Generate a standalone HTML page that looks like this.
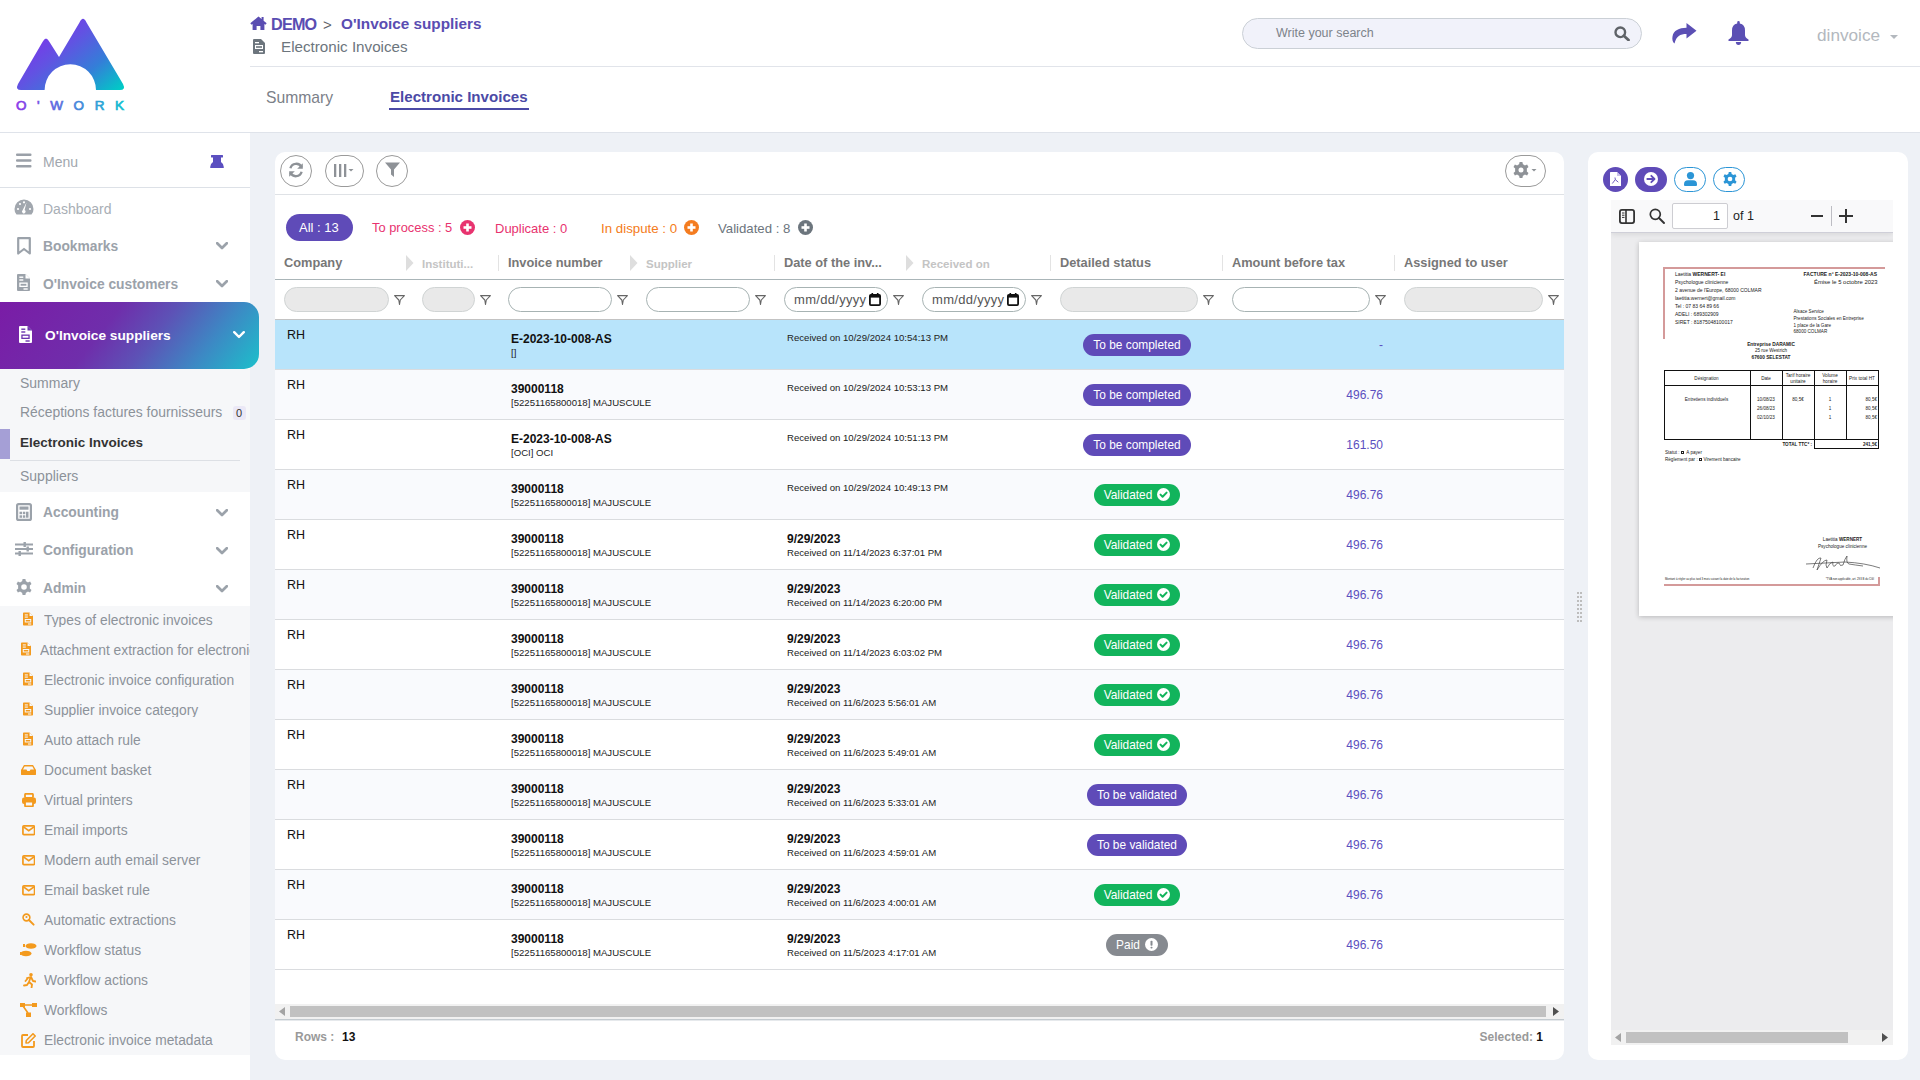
<!DOCTYPE html><html><head><meta charset="utf-8"><title>Electronic Invoices</title><style>

*{box-sizing:border-box}
html,body{margin:0;padding:0}
body{width:1920px;height:1080px;position:relative;overflow:hidden;background:#eef1f6;font-family:"Liberation Sans", sans-serif;}
.ab{position:absolute}
.t{position:absolute;white-space:nowrap;line-height:1}
svg{display:block}

</style></head><body>
<div class="ab" style="left:0;top:0;width:1920px;height:133px;background:#fff;border-bottom:1px solid #dfe3ea"></div>
<div class="ab" style="left:250px;top:66px;width:1670px;height:1px;background:#e1e4ea"></div>
<svg class="ab" style="left:0;top:0" width="250" height="132" viewBox="0 0 250 132">
<defs><linearGradient id="lg" x1="0" y1="0.15" x2="1" y2="0.95"><stop offset="0" stop-color="#8a24ee"/><stop offset="0.4" stop-color="#6153e2"/><stop offset="0.7" stop-color="#347ed8"/><stop offset="1" stop-color="#00cbc6"/></linearGradient>
<linearGradient id="lg2" x1="0" y1="0" x2="1" y2="0"><stop offset="0" stop-color="#8a3ae8"/><stop offset="1" stop-color="#12bfd0"/></linearGradient></defs>
<path d="M18 84 L42.5 42 Q46 35 49.5 42 L59 57 L79.5 22.5 Q83 15 86.5 22.5 L123 84 Q126 90 120 90 L96 90 A25.7 25.7 0 0 0 44.6 90 L21 90 Q15 90 18 84 Z" fill="url(#lg)"/>
<text x="16" y="110" font-family="Liberation Sans" font-size="13.5" fill="url(#lg2)" stroke="url(#lg2)" stroke-width="0.7" textLength="108" lengthAdjust="spacing">O'WORK</text>
</svg>
<svg class="ab" style="left:250px;top:16px" width="17" height="14" viewBox="0 0 17 14"><path d="M8.5 0.5 L0.3 7.3 L1.6 8.8 L2.6 8 L2.6 14 L6.6 14 L6.6 10 L10.4 10 L10.4 14 L14.4 14 L14.4 8 L15.4 8.8 L16.7 7.3 L13.6 4.7 L13.6 1 L11.6 1 L11.6 3 Z" fill="#5a4db2"/></svg>
<div class="t" style="left:271px;top:15.6px;font-size:16.2px;letter-spacing:-0.8px;font-weight:bold;color:#5a4db2">DEMO</div>
<div class="t" style="left:323px;top:16.5px;font-size:15px;color:#5f6368">&gt;</div>
<div class="t" style="left:341px;top:16.3px;font-size:15.3px;font-weight:bold;color:#5a4db2">O'Invoice suppliers</div>
<svg class="ab" style="left:253px;top:39px" width="12" height="15" viewBox="0 0 12 15"><path d="M0 1 Q0 0 1 0 L8 0 L12 4 L12 14 Q12 15 11 15 L1 15 Q0 15 0 14 Z" fill="#6c757d"/><rect x="2" y="3" width="4" height="1.3" fill="#fff"/><rect x="2" y="6" width="8" height="4" fill="#fff"/><rect x="3" y="7.2" width="6" height="1.6" fill="#6c757d"/><rect x="6" y="12" width="4" height="1.3" fill="#fff"/></svg>
<div class="t" style="left:281px;top:39px;font-size:15.2px;color:#6c757d">Electronic Invoices</div>
<div class="t" style="left:266px;top:90px;font-size:15.7px;color:#7b8088">Summary</div>
<div class="t" style="left:390px;top:89px;font-size:15.1px;font-weight:bold;color:#4b4aa6">Electronic Invoices</div>
<div class="ab" style="left:389px;top:108px;width:140px;height:2px;background:#4b4aa6"></div>
<div class="ab" style="left:1242px;top:18px;width:400px;height:31px;border-radius:16px;background:#f1f2fa;border:1px solid #cbd0d6"></div>
<div class="t" style="left:1276px;top:27px;font-size:12.5px;color:#7d838a">Write your search</div>
<svg class="ab" style="left:1614px;top:26px" width="16" height="15" viewBox="0 0 16 15"><circle cx="6.3" cy="6.3" r="4.8" fill="none" stroke="#5f6368" stroke-width="2.4"/><line x1="9.8" y1="9.8" x2="14.5" y2="14" stroke="#5f6368" stroke-width="2.8" stroke-linecap="round"/></svg>
<svg class="ab" style="left:1672px;top:23px" width="25" height="21" viewBox="0 0 25 21"><path d="M14.5 0 L24.5 7.8 L14.5 15.6 L14.5 11 C8 11 4.5 13 2.5 20.5 C0.5 19 0 16 0.5 13.5 C1.5 7.5 7 5 14.5 4.8 Z" fill="#5b4fb4"/></svg>
<svg class="ab" style="left:1728px;top:21px" width="21" height="24" viewBox="0 0 21 24"><path d="M10.5 0 Q11.8 0 11.8 1.4 L11.8 2.6 Q17 3.6 17 9.5 L17 14 Q17 16.5 20.5 18.5 L20.5 20 L0.5 20 L0.5 18.5 Q4 16.5 4 14 L4 9.5 Q4 3.6 9.2 2.6 L9.2 1.4 Q9.2 0 10.5 0 Z" fill="#5b4fb4"/><path d="M7.8 21 L13.2 21 Q13 24 10.5 24 Q8 24 7.8 21 Z" fill="#5b4fb4"/></svg>
<div class="t" style="left:1817px;top:27px;font-size:17.2px;color:#b3b8be">dinvoice</div>
<svg class="ab" style="left:1890px;top:35px" width="8" height="4" viewBox="0 0 8 4"><path d="M0 0 L8 0 L4 4 Z" fill="#b3b8be"/></svg>
<div class="ab" style="left:0;top:133px;width:250px;height:947px;background:#fff"></div>
<div class="ab" style="left:0;top:187px;width:250px;height:1px;background:#dde1e7"></div>
<svg class="ab" style="left:16px;top:153px" width="16" height="15" viewBox="0 0 16 15"><rect x="0" y="0.5" width="15.5" height="2.4" rx="1" fill="#9aa0a8"/><rect x="0" y="6.3" width="15.5" height="2.4" rx="1" fill="#9aa0a8"/><rect x="0" y="12" width="15.5" height="2.4" rx="1" fill="#9aa0a8"/></svg>
<div class="t" style="left:43px;top:155px;font-size:14px;color:#a1a7ae">Menu</div>
<svg class="ab" style="left:210px;top:155px" width="14" height="14" viewBox="0 0 14 14"><path d="M1 0.6 Q1 0 1.6 0 L12.4 0 Q13 0 13 0.6 L13 2 Q13 2.6 12.2 2.6 L11 2.6 L11 7 Q13.6 8.6 13.8 12 L13.8 12.4 Q13.8 13 13.2 13 L0.8 13 Q0.2 13 0.2 12.4 L0.2 12 Q0.4 8.6 3 7 L3 2.6 L1.8 2.6 Q1 2.6 1 2 Z" fill="#5b4fc0"/></svg>
<svg class="ab" style="left:14px;top:199px" width="20" height="16" viewBox="0 0 20 16"><path d="M10 0.5 A9.5 9.5 0 0 1 19.5 10 Q19.5 14 17.5 15.5 L2.5 15.5 Q0.5 14 0.5 10 A9.5 9.5 0 0 1 10 0.5 Z" fill="#a1a7ae"/><circle cx="4" cy="10" r="1.1" fill="#fff"/><circle cx="16" cy="10" r="1.1" fill="#fff"/><circle cx="6" cy="5" r="1.1" fill="#fff"/><circle cx="10" cy="3.3" r="1.1" fill="#fff"/><path d="M12.5 3.5 L10.6 11 A1.8 1.8 0 1 1 8.6 11.3 Z" fill="#fff"/></svg>
<div class="t" style="left:43px;top:202px;font-size:14px;color:#a8aeb5">Dashboard</div>
<svg class="ab" style="left:17px;top:237px" width="14" height="18" viewBox="0 0 14 18"><path d="M1.2 1.2 L12.8 1.2 L12.8 16.5 L7 12 L1.2 16.5 Z" fill="none" stroke="#9ba2aa" stroke-width="2.2" stroke-linejoin="round"/></svg>
<div class="t" style="left:43px;top:240px;font-size:13.8px;font-weight:bold;color:#9ba2aa">Bookmarks</div>
<svg class="ab" style="left:216px;top:242px" width="12" height="8" viewBox="0 0 12 8"><path d="M1.2 1.2 L6 6 L10.8 1.2" fill="none" stroke="#9ba2aa" stroke-width="2.7" stroke-linecap="round" stroke-linejoin="round"/></svg>
<svg class="ab" style="left:17px;top:274px" width="13" height="17" viewBox="0 0 13 17"><path d="M0 1 Q0 0 1 0 L8.5 0 L13 4.5 L13 16 Q13 17 12 17 L1 17 Q0 17 0 16 Z" fill="#9ba2aa"/><path d="M8.5 0 L8.5 4.5 L13 4.5" fill="#fff"/><rect x="2.3" y="2.5" width="4" height="1.4" fill="#fff"/><rect x="2.3" y="5.3" width="4" height="1.4" fill="#fff"/><rect x="2.3" y="8.5" width="8.4" height="4.5" fill="#fff"/><rect x="3.6" y="9.8" width="5.8" height="1.9" fill="#9ba2aa"/><rect x="6.5" y="14.3" width="4.2" height="1.4" fill="#fff"/></svg>
<div class="t" style="left:43px;top:278px;font-size:13.8px;font-weight:bold;color:#9ba2aa">O'Invoice customers</div>
<svg class="ab" style="left:216px;top:280px" width="12" height="8" viewBox="0 0 12 8"><path d="M1.2 1.2 L6 6 L10.8 1.2" fill="none" stroke="#9ba2aa" stroke-width="2.7" stroke-linecap="round" stroke-linejoin="round"/></svg>
<div class="ab" style="left:0;top:369px;width:250px;height:123px;background:#f6f7f9"></div>
<div class="ab" style="left:0;top:302px;width:259px;height:67px;border-radius:0 15px 15px 0;background:linear-gradient(128deg,#7a1ca6 0%,#6f2eab 40%,#5d52b6 58%,#3d88c4 78%,#1cc0cb 100%)"></div>
<svg class="ab" style="left:19px;top:326px" width="13" height="17" viewBox="0 0 13 17"><path d="M0 1 Q0 0 1 0 L8.5 0 L13 4.5 L13 16 Q13 17 12 17 L1 17 Q0 17 0 16 Z" fill="#fff"/><path d="M8.5 0 L8.5 4.5 L13 4.5" fill="#6c34ae"/><rect x="2.3" y="2.5" width="4" height="1.4" fill="#6c34ae"/><rect x="2.3" y="5.3" width="4" height="1.4" fill="#6c34ae"/><rect x="2.3" y="8.5" width="8.4" height="4.5" fill="#6c34ae"/><rect x="3.6" y="9.8" width="5.8" height="1.9" fill="#fff"/><rect x="6.5" y="14.3" width="4.2" height="1.4" fill="#6c34ae"/></svg>
<div class="t" style="left:45px;top:329px;font-size:13.7px;font-weight:bold;color:#fff">O'Invoice suppliers</div>
<svg class="ab" style="left:233px;top:331px" width="12" height="8" viewBox="0 0 12 8"><path d="M1.2 1.2 L6 6 L10.8 1.2" fill="none" stroke="#fff" stroke-width="2.4" stroke-linecap="round" stroke-linejoin="round"/></svg>
<div class="t" style="left:20px;top:376px;font-size:14px;color:#8c9299">Summary</div>
<div class="t" style="left:20px;top:406px;font-size:13.9px;color:#8c9299">Réceptions factures fournisseurs</div>
<div class="ab" style="left:233px;top:406px;width:13px;height:14px;border-radius:3px;background:#ebe8f6"></div>
<div class="t" style="left:236px;top:408px;font-size:11px;color:#333">0</div>
<div class="ab" style="left:0;top:429px;width:10px;height:30px;background:#a59fd6"></div>
<div class="t" style="left:20px;top:436px;font-size:13.5px;font-weight:bold;color:#333">Electronic Invoices</div>
<div class="ab" style="left:10px;top:460px;width:230px;height:1px;background:#dde0e5"></div>
<div class="t" style="left:20px;top:469px;font-size:14px;color:#8c9299">Suppliers</div>
<svg class="ab" style="left:16px;top:503px" width="16" height="18" viewBox="0 0 16 18"><rect x="1.1" y="1.1" width="13.8" height="15.8" rx="1.5" fill="none" stroke="#9ba2aa" stroke-width="2.2"/><rect x="3.5" y="3.5" width="9" height="3.2" fill="#9ba2aa"/><rect x="3.5" y="8.7" width="2.5" height="2.5" fill="#9ba2aa"/><rect x="6.8" y="8.7" width="2.5" height="2.5" fill="#9ba2aa"/><rect x="10" y="8.7" width="2.5" height="6" fill="#9ba2aa"/><rect x="3.5" y="12.3" width="2.5" height="2.5" fill="#9ba2aa"/><rect x="6.8" y="12.3" width="2.5" height="2.5" fill="#9ba2aa"/></svg>
<div class="t" style="left:43px;top:506px;font-size:13.8px;font-weight:bold;color:#9ba2aa">Accounting</div>
<svg class="ab" style="left:216px;top:509px" width="12" height="8" viewBox="0 0 12 8"><path d="M1.2 1.2 L6 6 L10.8 1.2" fill="none" stroke="#9ba2aa" stroke-width="2.7" stroke-linecap="round" stroke-linejoin="round"/></svg>
<svg class="ab" style="left:15px;top:542px" width="18" height="14" viewBox="0 0 18 14"><rect x="0" y="1.5" width="18" height="2" fill="#9ba2aa"/><rect x="0" y="6" width="18" height="2" fill="#9ba2aa"/><rect x="0" y="10.5" width="18" height="2" fill="#9ba2aa"/><rect x="8.5" y="0" width="2.4" height="5" fill="#9ba2aa"/><rect x="11.5" y="4.5" width="2.4" height="5" fill="#9ba2aa"/><rect x="3.5" y="9" width="2.4" height="5" fill="#9ba2aa"/></svg>
<div class="t" style="left:43px;top:544px;font-size:13.8px;font-weight:bold;color:#9ba2aa">Configuration</div>
<svg class="ab" style="left:216px;top:547px" width="12" height="8" viewBox="0 0 12 8"><path d="M1.2 1.2 L6 6 L10.8 1.2" fill="none" stroke="#9ba2aa" stroke-width="2.7" stroke-linecap="round" stroke-linejoin="round"/></svg>
<svg class="ab" style="left:16px;top:579px" width="16" height="16" viewBox="0 0 16 16"><path d="M6.6 0 L9.4 0 L9.9 2.3 Q11 2.7 11.9 3.4 L14.1 2.6 L15.5 5 L13.8 6.6 Q14 8 13.8 9.4 L15.5 11 L14.1 13.4 L11.9 12.6 Q11 13.3 9.9 13.7 L9.4 16 L6.6 16 L6.1 13.7 Q5 13.3 4.1 12.6 L1.9 13.4 L0.5 11 L2.2 9.4 Q2 8 2.2 6.6 L0.5 5 L1.9 2.6 L4.1 3.4 Q5 2.7 6.1 2.3 Z M8 5.2 A2.8 2.8 0 1 0 8 10.8 A2.8 2.8 0 1 0 8 5.2 Z" fill="#9ba2aa" fill-rule="evenodd"/></svg>
<div class="t" style="left:43px;top:582px;font-size:13.8px;font-weight:bold;color:#9ba2aa">Admin</div>
<svg class="ab" style="left:216px;top:585px" width="12" height="8" viewBox="0 0 12 8"><path d="M1.2 1.2 L6 6 L10.8 1.2" fill="none" stroke="#9ba2aa" stroke-width="2.7" stroke-linecap="round" stroke-linejoin="round"/></svg>
<div class="ab" style="left:0;top:606px;width:250px;height:449px;background:#f6f7f9"></div>
<svg class="ab" style="left:23px;top:612px" width="10" height="14" viewBox="0 0 13 17"><path d="M0 1 Q0 0 1 0 L8.5 0 L13 4.5 L13 16 Q13 17 12 17 L1 17 Q0 17 0 16 Z" fill="#f39a1e"/><path d="M8.5 0 L8.5 4.5 L13 4.5" fill="#f6f7f9"/><rect x="2.3" y="2.5" width="4" height="1.4" fill="#f6f7f9"/><rect x="2.3" y="5.3" width="4" height="1.4" fill="#f6f7f9"/><rect x="2.3" y="8.5" width="8.4" height="4.5" fill="#f6f7f9"/><rect x="3.6" y="9.8" width="5.8" height="1.9" fill="#f39a1e"/><rect x="6.5" y="14.3" width="4.2" height="1.4" fill="#f6f7f9"/></svg>
<div class="ab" style="left:44px;top:613.5px;width:206px;overflow:hidden;white-space:nowrap;line-height:1;font-size:13.8px;color:#8c9299">Types of electronic invoices</div>
<svg class="ab" style="left:21px;top:642px" width="10" height="14" viewBox="0 0 13 17"><path d="M0 1 Q0 0 1 0 L8.5 0 L13 4.5 L13 16 Q13 17 12 17 L1 17 Q0 17 0 16 Z" fill="#f39a1e"/><path d="M8.5 0 L8.5 4.5 L13 4.5" fill="#f6f7f9"/><rect x="2.3" y="2.5" width="4" height="1.4" fill="#f6f7f9"/><rect x="2.3" y="5.3" width="4" height="1.4" fill="#f6f7f9"/><rect x="2.3" y="8.5" width="8.4" height="4.5" fill="#f6f7f9"/><rect x="3.6" y="9.8" width="5.8" height="1.9" fill="#f39a1e"/><rect x="6.5" y="14.3" width="4.2" height="1.4" fill="#f6f7f9"/></svg>
<div class="ab" style="left:40px;top:643.5px;width:210px;overflow:hidden;white-space:nowrap;line-height:1;font-size:13.8px;color:#8c9299">Attachment extraction for electronic invoices</div>
<svg class="ab" style="left:23px;top:672px" width="10" height="14" viewBox="0 0 13 17"><path d="M0 1 Q0 0 1 0 L8.5 0 L13 4.5 L13 16 Q13 17 12 17 L1 17 Q0 17 0 16 Z" fill="#f39a1e"/><path d="M8.5 0 L8.5 4.5 L13 4.5" fill="#f6f7f9"/><rect x="2.3" y="2.5" width="4" height="1.4" fill="#f6f7f9"/><rect x="2.3" y="5.3" width="4" height="1.4" fill="#f6f7f9"/><rect x="2.3" y="8.5" width="8.4" height="4.5" fill="#f6f7f9"/><rect x="3.6" y="9.8" width="5.8" height="1.9" fill="#f39a1e"/><rect x="6.5" y="14.3" width="4.2" height="1.4" fill="#f6f7f9"/></svg>
<div class="ab" style="left:44px;top:673.5px;width:206px;overflow:hidden;white-space:nowrap;line-height:1;font-size:13.8px;color:#8c9299">Electronic invoice configuration</div>
<svg class="ab" style="left:23px;top:702px" width="10" height="14" viewBox="0 0 13 17"><path d="M0 1 Q0 0 1 0 L8.5 0 L13 4.5 L13 16 Q13 17 12 17 L1 17 Q0 17 0 16 Z" fill="#f39a1e"/><path d="M8.5 0 L8.5 4.5 L13 4.5" fill="#f6f7f9"/><rect x="2.3" y="2.5" width="4" height="1.4" fill="#f6f7f9"/><rect x="2.3" y="5.3" width="4" height="1.4" fill="#f6f7f9"/><rect x="2.3" y="8.5" width="8.4" height="4.5" fill="#f6f7f9"/><rect x="3.6" y="9.8" width="5.8" height="1.9" fill="#f39a1e"/><rect x="6.5" y="14.3" width="4.2" height="1.4" fill="#f6f7f9"/></svg>
<div class="ab" style="left:44px;top:703.5px;width:206px;overflow:hidden;white-space:nowrap;line-height:1;font-size:13.8px;color:#8c9299">Supplier invoice category</div>
<svg class="ab" style="left:23px;top:732px" width="10" height="14" viewBox="0 0 13 17"><path d="M0 1 Q0 0 1 0 L8.5 0 L13 4.5 L13 16 Q13 17 12 17 L1 17 Q0 17 0 16 Z" fill="#f39a1e"/><path d="M8.5 0 L8.5 4.5 L13 4.5" fill="#f6f7f9"/><rect x="2.3" y="2.5" width="4" height="1.4" fill="#f6f7f9"/><rect x="2.3" y="5.3" width="4" height="1.4" fill="#f6f7f9"/><rect x="2.3" y="8.5" width="8.4" height="4.5" fill="#f6f7f9"/><rect x="3.6" y="9.8" width="5.8" height="1.9" fill="#f39a1e"/><rect x="6.5" y="14.3" width="4.2" height="1.4" fill="#f6f7f9"/></svg>
<div class="ab" style="left:44px;top:733.5px;width:206px;overflow:hidden;white-space:nowrap;line-height:1;font-size:13.8px;color:#8c9299">Auto attach rule</div>
<svg class="ab" style="left:21px;top:765px" width="15" height="10" viewBox="0 0 15 12" preserveAspectRatio="none"><path d="M3 0 L12 0 L15 6 L15 11 Q15 12 14 12 L1 12 Q0 12 0 11 L0 6 Z" fill="#f39a1e"/><path d="M3.6 1.8 L11.4 1.8 L13 5.5 L9.5 5.5 L8.7 7.3 L6.3 7.3 L5.5 5.5 L2 5.5 Z" fill="#f6f7f9"/></svg>
<div class="ab" style="left:44px;top:763.5px;width:206px;overflow:hidden;white-space:nowrap;line-height:1;font-size:13.8px;color:#8c9299">Document basket</div>
<svg class="ab" style="left:22px;top:793px" width="14" height="14" viewBox="0 0 14 14"><rect x="3" y="0.8" width="8" height="4" rx="1" fill="none" stroke="#f39a1e" stroke-width="1.8"/><rect x="0" y="4.5" width="14" height="6.5" rx="2" fill="#f39a1e"/><rect x="3" y="8.5" width="8" height="5" rx="1" fill="#f6f7f9" stroke="#f39a1e" stroke-width="1.8"/></svg>
<div class="ab" style="left:44px;top:793.5px;width:206px;overflow:hidden;white-space:nowrap;line-height:1;font-size:13.8px;color:#8c9299">Virtual printers</div>
<svg class="ab" style="left:21.5px;top:825px" width="13.5" height="10.5" viewBox="0 0 14 11"><rect x="0.9" y="0.9" width="12.2" height="9.2" rx="1" fill="none" stroke="#f39a1e" stroke-width="1.8"/><path d="M1.5 2 L7 6 L12.5 2" fill="none" stroke="#f39a1e" stroke-width="1.8"/></svg>
<div class="ab" style="left:44px;top:823.5px;width:206px;overflow:hidden;white-space:nowrap;line-height:1;font-size:13.8px;color:#8c9299">Email imports</div>
<svg class="ab" style="left:21.5px;top:855px" width="13.5" height="10.5" viewBox="0 0 14 11"><rect x="0.9" y="0.9" width="12.2" height="9.2" rx="1" fill="none" stroke="#f39a1e" stroke-width="1.8"/><path d="M1.5 2 L7 6 L12.5 2" fill="none" stroke="#f39a1e" stroke-width="1.8"/></svg>
<div class="ab" style="left:44px;top:853.5px;width:206px;overflow:hidden;white-space:nowrap;line-height:1;font-size:13.8px;color:#8c9299">Modern auth email server</div>
<svg class="ab" style="left:21.5px;top:885px" width="13.5" height="10.5" viewBox="0 0 14 11"><rect x="0.9" y="0.9" width="12.2" height="9.2" rx="1" fill="none" stroke="#f39a1e" stroke-width="1.8"/><path d="M1.5 2 L7 6 L12.5 2" fill="none" stroke="#f39a1e" stroke-width="1.8"/></svg>
<div class="ab" style="left:44px;top:883.5px;width:206px;overflow:hidden;white-space:nowrap;line-height:1;font-size:13.8px;color:#8c9299">Email basket rule</div>
<svg class="ab" style="left:22px;top:913px" width="12.5" height="12.5" viewBox="0 0 14 14"><circle cx="5" cy="5" r="3.8" fill="none" stroke="#f39a1e" stroke-width="1.8"/><line x1="7.8" y1="7.8" x2="13" y2="13" stroke="#f39a1e" stroke-width="2.2" stroke-linecap="round"/><circle cx="5" cy="4.5" r="1.2" fill="#f39a1e"/></svg>
<div class="ab" style="left:44px;top:913.5px;width:206px;overflow:hidden;white-space:nowrap;line-height:1;font-size:13.8px;color:#8c9299">Automatic extractions</div>
<svg class="ab" style="left:20px;top:943px" width="17" height="14" viewBox="0 0 17 14"><ellipse cx="11" cy="3" rx="5.5" ry="2.8" fill="#f39a1e"/><ellipse cx="6" cy="10.5" rx="5.5" ry="2.8" fill="#f39a1e"/><rect x="3" y="1" width="2" height="3" fill="#f39a1e"/><rect x="0" y="9" width="1.5" height="3" fill="#f39a1e"/></svg>
<div class="ab" style="left:44px;top:943.5px;width:206px;overflow:hidden;white-space:nowrap;line-height:1;font-size:13.8px;color:#8c9299">Workflow status</div>
<svg class="ab" style="left:23px;top:973px" width="13" height="15" viewBox="0 0 13 15"><circle cx="8" cy="1.8" r="1.8" fill="#f39a1e"/><path d="M4 5 L8 4 L10 8 L12.5 8.5 M7.5 4.5 L6 9 L9 11.5 L8.5 15 M6 9 L4 12 L1 12.5 M5 5 L2.5 8" fill="none" stroke="#f39a1e" stroke-width="1.8" stroke-linecap="round" stroke-linejoin="round"/></svg>
<div class="ab" style="left:44px;top:973.5px;width:206px;overflow:hidden;white-space:nowrap;line-height:1;font-size:13.8px;color:#8c9299">Workflow actions</div>
<svg class="ab" style="left:20px;top:1003px" width="17" height="14" viewBox="0 0 17 14"><rect x="0" y="0" width="5" height="4" fill="#f39a1e"/><rect x="12" y="0" width="5" height="4" fill="#f39a1e"/><rect x="6" y="9.5" width="5" height="4.5" fill="#f39a1e"/><path d="M4 2 L13 2 M3 3 L8 10" stroke="#f39a1e" stroke-width="1.6"/></svg>
<div class="ab" style="left:44px;top:1003.5px;width:206px;overflow:hidden;white-space:nowrap;line-height:1;font-size:13.8px;color:#8c9299">Workflows</div>
<svg class="ab" style="left:21px;top:1033px" width="15" height="15" viewBox="0 0 15 15"><path d="M7 2 L2 2 Q1 2 1 3 L1 13 Q1 14 2 14 L12 14 Q13 14 13 13 L13 8" fill="none" stroke="#f39a1e" stroke-width="1.8"/><path d="M12 0.8 L14.2 3 L7.5 9.7 L5 10 L5.3 7.5 Z" fill="none" stroke="#f39a1e" stroke-width="1.6" stroke-linejoin="round"/></svg>
<div class="ab" style="left:44px;top:1033.5px;width:206px;overflow:hidden;white-space:nowrap;line-height:1;font-size:13.8px;color:#8c9299">Electronic invoice metadata</div>
<div class="ab" style="left:275px;top:152px;width:1289px;height:908px;background:#fff;border-radius:10px"></div>
<div class="ab" style="left:280px;top:155px;width:32px;height:32px;border-radius:50%;border:1px solid #9a9a9a"></div>
<svg class="ab" style="left:288px;top:162px" width="16" height="16" viewBox="0 0 16 16"><path d="M13.6 5.2 A6 6 0 0 0 2.4 6.3" fill="none" stroke="#8e9297" stroke-width="2.4"/><path d="M14.8 1.2 L14.8 6.8 L9.2 6.8 Z" fill="#8e9297"/><path d="M2.4 10.8 A6 6 0 0 0 13.6 9.7" fill="none" stroke="#8e9297" stroke-width="2.4"/><path d="M1.2 14.8 L1.2 9.2 L6.8 9.2 Z" fill="#8e9297"/></svg>
<div class="ab" style="left:325px;top:155px;width:39px;height:32px;border-radius:16px;border:1px solid #9a9a9a"></div>
<svg class="ab" style="left:334px;top:164px" width="20" height="14" viewBox="0 0 20 14"><rect x="0" y="0" width="2.3" height="13" fill="#8e9297"/><rect x="5" y="0" width="2.3" height="13" fill="#8e9297"/><rect x="10" y="0" width="2.3" height="13" fill="#8e9297"/><path d="M14.5 5 L19.5 5 L17 7.5 Z" fill="#8e9297"/></svg>
<div class="ab" style="left:376px;top:155px;width:32px;height:32px;border-radius:50%;border:1px solid #9a9a9a"></div>
<svg class="ab" style="left:385px;top:162px" width="15" height="16" viewBox="0 0 15 16"><path d="M0 0.5 L15 0.5 L9 7.5 L9 15 L6 12.5 L6 7.5 Z" fill="#8e9297"/></svg>
<div class="ab" style="left:1505px;top:155px;width:41px;height:32px;border-radius:16px;border:1px solid #9a9a9a"></div>
<svg class="ab" style="left:1513px;top:162px" width="26" height="16" viewBox="0 0 26 16"><path d="M6.6 0 L9.4 0 L9.9 2.3 Q11 2.7 11.9 3.4 L14.1 2.6 L15.5 5 L13.8 6.6 Q14 8 13.8 9.4 L15.5 11 L14.1 13.4 L11.9 12.6 Q11 13.3 9.9 13.7 L9.4 16 L6.6 16 L6.1 13.7 Q5 13.3 4.1 12.6 L1.9 13.4 L0.5 11 L2.2 9.4 Q2 8 2.2 6.6 L0.5 5 L1.9 2.6 L4.1 3.4 Q5 2.7 6.1 2.3 Z M8 5.5 A2.5 2.5 0 1 0 8 10.5 A2.5 2.5 0 1 0 8 5.5 Z" fill="#8e9297" fill-rule="evenodd"/><path d="M18.5 7 L23.5 7 L21 9.5 Z" fill="#8e9297"/></svg>
<div class="ab" style="left:275px;top:194px;width:1289px;height:1px;background:#dfe2e6"></div>
<div class="ab" style="left:286px;top:214px;width:67px;height:27px;border-radius:14px;background:#5f4bb8"></div>
<div class="t" style="left:299px;top:221px;font-size:13px;color:#fff">All : 13</div>
<div class="t" style="left:372px;top:222px;font-size:12.9px;color:#e8336f">To process : 5</div>
<svg class="ab" style="left:460px;top:220px" width="15" height="15" viewBox="0 0 15 15"><circle cx="7.5" cy="7.5" r="7.5" fill="#e8336f"/><rect x="3.5" y="6.2" width="8" height="2.6" fill="#fff"/><rect x="6.2" y="3.5" width="2.6" height="8" fill="#fff"/></svg>
<div class="t" style="left:495px;top:222px;font-size:13px;color:#e8336f">Duplicate : 0</div>
<div class="t" style="left:601px;top:222px;font-size:13.3px;color:#f47c20">In dispute : 0</div>
<svg class="ab" style="left:684px;top:220px" width="15" height="15" viewBox="0 0 15 15"><circle cx="7.5" cy="7.5" r="7.5" fill="#f47c20"/><rect x="3.5" y="6.2" width="8" height="2.6" fill="#fff"/><rect x="6.2" y="3.5" width="2.6" height="8" fill="#fff"/></svg>
<div class="t" style="left:718px;top:222px;font-size:13.2px;color:#6c757d">Validated : 8</div>
<svg class="ab" style="left:798px;top:220px" width="15" height="15" viewBox="0 0 15 15"><circle cx="7.5" cy="7.5" r="7.5" fill="#6c757d"/><rect x="3.5" y="6.2" width="8" height="2.6" fill="#fff"/><rect x="6.2" y="3.5" width="2.6" height="8" fill="#fff"/></svg>
<div class="t" style="left:284px;top:257.2px;font-size:12.8px;font-weight:bold;color:#777">Company</div>
<div class="t" style="left:422px;top:259px;font-size:11.5px;font-weight:bold;color:#c4c4c4">Instituti...</div>
<svg class="ab" style="left:406px;top:255px" width="8" height="16" viewBox="0 0 8 16"><path d="M0 0 L7.5 8 L0 16 Z" fill="#dedede"/></svg>
<div class="t" style="left:508px;top:257.2px;font-size:12.8px;font-weight:bold;color:#777">Invoice number</div>
<div class="t" style="left:646px;top:259px;font-size:11.5px;font-weight:bold;color:#c4c4c4">Supplier</div>
<svg class="ab" style="left:630px;top:255px" width="8" height="16" viewBox="0 0 8 16"><path d="M0 0 L7.5 8 L0 16 Z" fill="#dedede"/></svg>
<div class="t" style="left:784px;top:257.2px;font-size:12.8px;font-weight:bold;color:#777">Date of the inv...</div>
<div class="t" style="left:922px;top:259px;font-size:11.5px;font-weight:bold;color:#c4c4c4">Received on</div>
<svg class="ab" style="left:906px;top:255px" width="8" height="16" viewBox="0 0 8 16"><path d="M0 0 L7.5 8 L0 16 Z" fill="#dedede"/></svg>
<div class="t" style="left:1060px;top:257.2px;font-size:12.8px;font-weight:bold;color:#777">Detailed status</div>
<div class="t" style="left:1232px;top:257.2px;font-size:12.8px;font-weight:bold;color:#777">Amount before tax</div>
<div class="t" style="left:1404px;top:257.2px;font-size:12.8px;font-weight:bold;color:#777">Assigned to user</div>
<div class="ab" style="left:498px;top:255px;width:1px;height:16px;background:#e3e3e3"></div>
<div class="ab" style="left:774px;top:255px;width:1px;height:16px;background:#e3e3e3"></div>
<div class="ab" style="left:1050px;top:255px;width:1px;height:16px;background:#e3e3e3"></div>
<div class="ab" style="left:1222px;top:255px;width:1px;height:16px;background:#e3e3e3"></div>
<div class="ab" style="left:1394px;top:255px;width:1px;height:16px;background:#e3e3e3"></div>
<div class="ab" style="left:275px;top:279px;width:1289px;height:1px;background:#aab5b8"></div>
<div class="ab" style="left:275px;top:319px;width:1289px;height:1px;background:#c3c3c3"></div>
<div class="ab" style="left:284px;top:287px;width:105px;height:25px;border-radius:13px;background:#e9e9e9;border:1px solid #d0d4d4"></div>
<svg class="ab" style="left:394px;top:295px" width="11" height="10" viewBox="0 0 11 10"><path d="M0.6 0.6 L10.4 0.6 L6.3 5 L5.5 9.5 L4.8 5 Z" fill="none" stroke="#666" stroke-width="1.1" stroke-linejoin="round"/></svg>
<div class="ab" style="left:422px;top:287px;width:53px;height:25px;border-radius:13px;background:#e9e9e9;border:1px solid #d0d4d4"></div>
<svg class="ab" style="left:480px;top:295px" width="11" height="10" viewBox="0 0 11 10"><path d="M0.6 0.6 L10.4 0.6 L6.3 5 L5.5 9.5 L4.8 5 Z" fill="none" stroke="#666" stroke-width="1.1" stroke-linejoin="round"/></svg>
<div class="ab" style="left:508px;top:287px;width:104px;height:25px;border-radius:13px;background:#fff;border:1px solid #a7b3b3"></div>
<svg class="ab" style="left:617px;top:295px" width="11" height="10" viewBox="0 0 11 10"><path d="M0.6 0.6 L10.4 0.6 L6.3 5 L5.5 9.5 L4.8 5 Z" fill="none" stroke="#666" stroke-width="1.1" stroke-linejoin="round"/></svg>
<div class="ab" style="left:646px;top:287px;width:104px;height:25px;border-radius:13px;background:#fff;border:1px solid #a7b3b3"></div>
<svg class="ab" style="left:755px;top:295px" width="11" height="10" viewBox="0 0 11 10"><path d="M0.6 0.6 L10.4 0.6 L6.3 5 L5.5 9.5 L4.8 5 Z" fill="none" stroke="#666" stroke-width="1.1" stroke-linejoin="round"/></svg>
<div class="ab" style="left:784px;top:287px;width:104px;height:25px;border-radius:13px;background:#fff;border:1px solid #a7b3b3"></div>
<div class="t" style="left:794px;top:293px;font-size:13px;letter-spacing:0.3px;color:#555">mm/dd/yyyy</div>
<svg class="ab" style="left:869px;top:293px" width="12" height="13" viewBox="0 0 12 13"><rect x="0.9" y="2" width="10.2" height="10.1" rx="1" fill="none" stroke="#111" stroke-width="1.8"/><rect x="0.9" y="2" width="10.2" height="2.6" fill="#111"/><rect x="2.5" y="0" width="1.6" height="3" fill="#111"/><rect x="7.9" y="0" width="1.6" height="3" fill="#111"/></svg>
<svg class="ab" style="left:893px;top:295px" width="11" height="10" viewBox="0 0 11 10"><path d="M0.6 0.6 L10.4 0.6 L6.3 5 L5.5 9.5 L4.8 5 Z" fill="none" stroke="#666" stroke-width="1.1" stroke-linejoin="round"/></svg>
<div class="ab" style="left:922px;top:287px;width:104px;height:25px;border-radius:13px;background:#fff;border:1px solid #a7b3b3"></div>
<div class="t" style="left:932px;top:293px;font-size:13px;letter-spacing:0.3px;color:#555">mm/dd/yyyy</div>
<svg class="ab" style="left:1007px;top:293px" width="12" height="13" viewBox="0 0 12 13"><rect x="0.9" y="2" width="10.2" height="10.1" rx="1" fill="none" stroke="#111" stroke-width="1.8"/><rect x="0.9" y="2" width="10.2" height="2.6" fill="#111"/><rect x="2.5" y="0" width="1.6" height="3" fill="#111"/><rect x="7.9" y="0" width="1.6" height="3" fill="#111"/></svg>
<svg class="ab" style="left:1031px;top:295px" width="11" height="10" viewBox="0 0 11 10"><path d="M0.6 0.6 L10.4 0.6 L6.3 5 L5.5 9.5 L4.8 5 Z" fill="none" stroke="#666" stroke-width="1.1" stroke-linejoin="round"/></svg>
<div class="ab" style="left:1060px;top:287px;width:138px;height:25px;border-radius:13px;background:#e9e9e9;border:1px solid #d0d4d4"></div>
<svg class="ab" style="left:1203px;top:295px" width="11" height="10" viewBox="0 0 11 10"><path d="M0.6 0.6 L10.4 0.6 L6.3 5 L5.5 9.5 L4.8 5 Z" fill="none" stroke="#666" stroke-width="1.1" stroke-linejoin="round"/></svg>
<div class="ab" style="left:1232px;top:287px;width:138px;height:25px;border-radius:13px;background:#fff;border:1px solid #a7b3b3"></div>
<svg class="ab" style="left:1375px;top:295px" width="11" height="10" viewBox="0 0 11 10"><path d="M0.6 0.6 L10.4 0.6 L6.3 5 L5.5 9.5 L4.8 5 Z" fill="none" stroke="#666" stroke-width="1.1" stroke-linejoin="round"/></svg>
<div class="ab" style="left:1404px;top:287px;width:139px;height:25px;border-radius:13px;background:#e9e9e9;border:1px solid #d0d4d4"></div>
<svg class="ab" style="left:1548px;top:295px" width="11" height="10" viewBox="0 0 11 10"><path d="M0.6 0.6 L10.4 0.6 L6.3 5 L5.5 9.5 L4.8 5 Z" fill="none" stroke="#666" stroke-width="1.1" stroke-linejoin="round"/></svg>
<div class="ab" style="left:275px;top:320px;width:1289px;height:49px;background:#b8e4fb"></div>
<div class="ab" style="left:275px;top:369px;width:1289px;height:1px;background:#dadcdf"></div>
<div class="t" style="left:287px;top:329.3px;font-size:12.5px;color:#111">RH</div>
<div class="t" style="left:511px;top:333px;font-size:12px;font-weight:bold;color:#111">E-2023-10-008-AS</div>
<div class="t" style="left:511px;top:348px;font-size:9.6px;color:#222">[]</div>
<div class="t" style="left:787px;top:333px;font-size:9.6px;color:#222">Received on 10/29/2024 10:54:13 PM</div>
<div class="ab" style="left:1051px;top:334px;width:172px;text-align:center"><span style="display:inline-block;height:22px;line-height:22px;padding:0 10px;border-radius:11px;background:#5f4bb8;color:#fff;font-size:11.9px">To be completed</span></div>
<div class="t" style="left:1223px;top:339px;width:160px;text-align:right;font-size:12px;color:#5b4fbf">-</div>
<div class="ab" style="left:275px;top:370px;width:1289px;height:49px;background:#f9fafd"></div>
<div class="ab" style="left:275px;top:419px;width:1289px;height:1px;background:#dadcdf"></div>
<div class="t" style="left:287px;top:379.3px;font-size:12.5px;color:#111">RH</div>
<div class="t" style="left:511px;top:383px;font-size:12px;font-weight:bold;color:#111">39000118</div>
<div class="t" style="left:511px;top:398px;font-size:9.6px;color:#222">[52251165800018] MAJUSCULE</div>
<div class="t" style="left:787px;top:383px;font-size:9.6px;color:#222">Received on 10/29/2024 10:53:13 PM</div>
<div class="ab" style="left:1051px;top:384px;width:172px;text-align:center"><span style="display:inline-block;height:22px;line-height:22px;padding:0 10px;border-radius:11px;background:#5f4bb8;color:#fff;font-size:11.9px">To be completed</span></div>
<div class="t" style="left:1223px;top:389px;width:160px;text-align:right;font-size:12px;color:#5b4fbf">496.76</div>
<div class="ab" style="left:275px;top:420px;width:1289px;height:49px;background:#fff"></div>
<div class="ab" style="left:275px;top:469px;width:1289px;height:1px;background:#dadcdf"></div>
<div class="t" style="left:287px;top:429.3px;font-size:12.5px;color:#111">RH</div>
<div class="t" style="left:511px;top:433px;font-size:12px;font-weight:bold;color:#111">E-2023-10-008-AS</div>
<div class="t" style="left:511px;top:448px;font-size:9.6px;color:#222">[OCI] OCI</div>
<div class="t" style="left:787px;top:433px;font-size:9.6px;color:#222">Received on 10/29/2024 10:51:13 PM</div>
<div class="ab" style="left:1051px;top:434px;width:172px;text-align:center"><span style="display:inline-block;height:22px;line-height:22px;padding:0 10px;border-radius:11px;background:#5f4bb8;color:#fff;font-size:11.9px">To be completed</span></div>
<div class="t" style="left:1223px;top:439px;width:160px;text-align:right;font-size:12px;color:#5b4fbf">161.50</div>
<div class="ab" style="left:275px;top:470px;width:1289px;height:49px;background:#f9fafd"></div>
<div class="ab" style="left:275px;top:519px;width:1289px;height:1px;background:#dadcdf"></div>
<div class="t" style="left:287px;top:479.3px;font-size:12.5px;color:#111">RH</div>
<div class="t" style="left:511px;top:483px;font-size:12px;font-weight:bold;color:#111">39000118</div>
<div class="t" style="left:511px;top:498px;font-size:9.6px;color:#222">[52251165800018] MAJUSCULE</div>
<div class="t" style="left:787px;top:483px;font-size:9.6px;color:#222">Received on 10/29/2024 10:49:13 PM</div>
<div class="ab" style="left:1051px;top:484px;width:172px;text-align:center"><span style="display:inline-block;height:22px;line-height:22px;padding:0 10px;border-radius:11px;background:#12b45c;color:#fff;font-size:11.9px">Validated<svg style="display:inline-block;vertical-align:-2px;margin-left:5px" width="13" height="13" viewBox="0 0 13 13"><circle cx="6.5" cy="6.5" r="6.5" fill="#fff"/><path d="M3.5 6.6 L5.6 8.7 L9.6 4.6" fill="none" stroke="#12b45c" stroke-width="2" stroke-linecap="round" stroke-linejoin="round"/></svg></span></div>
<div class="t" style="left:1223px;top:489px;width:160px;text-align:right;font-size:12px;color:#5b4fbf">496.76</div>
<div class="ab" style="left:275px;top:520px;width:1289px;height:49px;background:#fff"></div>
<div class="ab" style="left:275px;top:569px;width:1289px;height:1px;background:#dadcdf"></div>
<div class="t" style="left:287px;top:529.3px;font-size:12.5px;color:#111">RH</div>
<div class="t" style="left:511px;top:533px;font-size:12px;font-weight:bold;color:#111">39000118</div>
<div class="t" style="left:511px;top:548px;font-size:9.6px;color:#222">[52251165800018] MAJUSCULE</div>
<div class="t" style="left:787px;top:533px;font-size:12px;font-weight:bold;color:#111">9/29/2023</div>
<div class="t" style="left:787px;top:548px;font-size:9.6px;color:#222">Received on 11/14/2023 6:37:01 PM</div>
<div class="ab" style="left:1051px;top:534px;width:172px;text-align:center"><span style="display:inline-block;height:22px;line-height:22px;padding:0 10px;border-radius:11px;background:#12b45c;color:#fff;font-size:11.9px">Validated<svg style="display:inline-block;vertical-align:-2px;margin-left:5px" width="13" height="13" viewBox="0 0 13 13"><circle cx="6.5" cy="6.5" r="6.5" fill="#fff"/><path d="M3.5 6.6 L5.6 8.7 L9.6 4.6" fill="none" stroke="#12b45c" stroke-width="2" stroke-linecap="round" stroke-linejoin="round"/></svg></span></div>
<div class="t" style="left:1223px;top:539px;width:160px;text-align:right;font-size:12px;color:#5b4fbf">496.76</div>
<div class="ab" style="left:275px;top:570px;width:1289px;height:49px;background:#f9fafd"></div>
<div class="ab" style="left:275px;top:619px;width:1289px;height:1px;background:#dadcdf"></div>
<div class="t" style="left:287px;top:579.3px;font-size:12.5px;color:#111">RH</div>
<div class="t" style="left:511px;top:583px;font-size:12px;font-weight:bold;color:#111">39000118</div>
<div class="t" style="left:511px;top:598px;font-size:9.6px;color:#222">[52251165800018] MAJUSCULE</div>
<div class="t" style="left:787px;top:583px;font-size:12px;font-weight:bold;color:#111">9/29/2023</div>
<div class="t" style="left:787px;top:598px;font-size:9.6px;color:#222">Received on 11/14/2023 6:20:00 PM</div>
<div class="ab" style="left:1051px;top:584px;width:172px;text-align:center"><span style="display:inline-block;height:22px;line-height:22px;padding:0 10px;border-radius:11px;background:#12b45c;color:#fff;font-size:11.9px">Validated<svg style="display:inline-block;vertical-align:-2px;margin-left:5px" width="13" height="13" viewBox="0 0 13 13"><circle cx="6.5" cy="6.5" r="6.5" fill="#fff"/><path d="M3.5 6.6 L5.6 8.7 L9.6 4.6" fill="none" stroke="#12b45c" stroke-width="2" stroke-linecap="round" stroke-linejoin="round"/></svg></span></div>
<div class="t" style="left:1223px;top:589px;width:160px;text-align:right;font-size:12px;color:#5b4fbf">496.76</div>
<div class="ab" style="left:275px;top:620px;width:1289px;height:49px;background:#fff"></div>
<div class="ab" style="left:275px;top:669px;width:1289px;height:1px;background:#dadcdf"></div>
<div class="t" style="left:287px;top:629.3px;font-size:12.5px;color:#111">RH</div>
<div class="t" style="left:511px;top:633px;font-size:12px;font-weight:bold;color:#111">39000118</div>
<div class="t" style="left:511px;top:648px;font-size:9.6px;color:#222">[52251165800018] MAJUSCULE</div>
<div class="t" style="left:787px;top:633px;font-size:12px;font-weight:bold;color:#111">9/29/2023</div>
<div class="t" style="left:787px;top:648px;font-size:9.6px;color:#222">Received on 11/14/2023 6:03:02 PM</div>
<div class="ab" style="left:1051px;top:634px;width:172px;text-align:center"><span style="display:inline-block;height:22px;line-height:22px;padding:0 10px;border-radius:11px;background:#12b45c;color:#fff;font-size:11.9px">Validated<svg style="display:inline-block;vertical-align:-2px;margin-left:5px" width="13" height="13" viewBox="0 0 13 13"><circle cx="6.5" cy="6.5" r="6.5" fill="#fff"/><path d="M3.5 6.6 L5.6 8.7 L9.6 4.6" fill="none" stroke="#12b45c" stroke-width="2" stroke-linecap="round" stroke-linejoin="round"/></svg></span></div>
<div class="t" style="left:1223px;top:639px;width:160px;text-align:right;font-size:12px;color:#5b4fbf">496.76</div>
<div class="ab" style="left:275px;top:670px;width:1289px;height:49px;background:#f9fafd"></div>
<div class="ab" style="left:275px;top:719px;width:1289px;height:1px;background:#dadcdf"></div>
<div class="t" style="left:287px;top:679.3px;font-size:12.5px;color:#111">RH</div>
<div class="t" style="left:511px;top:683px;font-size:12px;font-weight:bold;color:#111">39000118</div>
<div class="t" style="left:511px;top:698px;font-size:9.6px;color:#222">[52251165800018] MAJUSCULE</div>
<div class="t" style="left:787px;top:683px;font-size:12px;font-weight:bold;color:#111">9/29/2023</div>
<div class="t" style="left:787px;top:698px;font-size:9.6px;color:#222">Received on 11/6/2023 5:56:01 AM</div>
<div class="ab" style="left:1051px;top:684px;width:172px;text-align:center"><span style="display:inline-block;height:22px;line-height:22px;padding:0 10px;border-radius:11px;background:#12b45c;color:#fff;font-size:11.9px">Validated<svg style="display:inline-block;vertical-align:-2px;margin-left:5px" width="13" height="13" viewBox="0 0 13 13"><circle cx="6.5" cy="6.5" r="6.5" fill="#fff"/><path d="M3.5 6.6 L5.6 8.7 L9.6 4.6" fill="none" stroke="#12b45c" stroke-width="2" stroke-linecap="round" stroke-linejoin="round"/></svg></span></div>
<div class="t" style="left:1223px;top:689px;width:160px;text-align:right;font-size:12px;color:#5b4fbf">496.76</div>
<div class="ab" style="left:275px;top:720px;width:1289px;height:49px;background:#fff"></div>
<div class="ab" style="left:275px;top:769px;width:1289px;height:1px;background:#dadcdf"></div>
<div class="t" style="left:287px;top:729.3px;font-size:12.5px;color:#111">RH</div>
<div class="t" style="left:511px;top:733px;font-size:12px;font-weight:bold;color:#111">39000118</div>
<div class="t" style="left:511px;top:748px;font-size:9.6px;color:#222">[52251165800018] MAJUSCULE</div>
<div class="t" style="left:787px;top:733px;font-size:12px;font-weight:bold;color:#111">9/29/2023</div>
<div class="t" style="left:787px;top:748px;font-size:9.6px;color:#222">Received on 11/6/2023 5:49:01 AM</div>
<div class="ab" style="left:1051px;top:734px;width:172px;text-align:center"><span style="display:inline-block;height:22px;line-height:22px;padding:0 10px;border-radius:11px;background:#12b45c;color:#fff;font-size:11.9px">Validated<svg style="display:inline-block;vertical-align:-2px;margin-left:5px" width="13" height="13" viewBox="0 0 13 13"><circle cx="6.5" cy="6.5" r="6.5" fill="#fff"/><path d="M3.5 6.6 L5.6 8.7 L9.6 4.6" fill="none" stroke="#12b45c" stroke-width="2" stroke-linecap="round" stroke-linejoin="round"/></svg></span></div>
<div class="t" style="left:1223px;top:739px;width:160px;text-align:right;font-size:12px;color:#5b4fbf">496.76</div>
<div class="ab" style="left:275px;top:770px;width:1289px;height:49px;background:#f9fafd"></div>
<div class="ab" style="left:275px;top:819px;width:1289px;height:1px;background:#dadcdf"></div>
<div class="t" style="left:287px;top:779.3px;font-size:12.5px;color:#111">RH</div>
<div class="t" style="left:511px;top:783px;font-size:12px;font-weight:bold;color:#111">39000118</div>
<div class="t" style="left:511px;top:798px;font-size:9.6px;color:#222">[52251165800018] MAJUSCULE</div>
<div class="t" style="left:787px;top:783px;font-size:12px;font-weight:bold;color:#111">9/29/2023</div>
<div class="t" style="left:787px;top:798px;font-size:9.6px;color:#222">Received on 11/6/2023 5:33:01 AM</div>
<div class="ab" style="left:1051px;top:784px;width:172px;text-align:center"><span style="display:inline-block;height:22px;line-height:22px;padding:0 10px;border-radius:11px;background:#5f4bb8;color:#fff;font-size:11.9px">To be validated</span></div>
<div class="t" style="left:1223px;top:789px;width:160px;text-align:right;font-size:12px;color:#5b4fbf">496.76</div>
<div class="ab" style="left:275px;top:820px;width:1289px;height:49px;background:#fff"></div>
<div class="ab" style="left:275px;top:869px;width:1289px;height:1px;background:#dadcdf"></div>
<div class="t" style="left:287px;top:829.3px;font-size:12.5px;color:#111">RH</div>
<div class="t" style="left:511px;top:833px;font-size:12px;font-weight:bold;color:#111">39000118</div>
<div class="t" style="left:511px;top:848px;font-size:9.6px;color:#222">[52251165800018] MAJUSCULE</div>
<div class="t" style="left:787px;top:833px;font-size:12px;font-weight:bold;color:#111">9/29/2023</div>
<div class="t" style="left:787px;top:848px;font-size:9.6px;color:#222">Received on 11/6/2023 4:59:01 AM</div>
<div class="ab" style="left:1051px;top:834px;width:172px;text-align:center"><span style="display:inline-block;height:22px;line-height:22px;padding:0 10px;border-radius:11px;background:#5f4bb8;color:#fff;font-size:11.9px">To be validated</span></div>
<div class="t" style="left:1223px;top:839px;width:160px;text-align:right;font-size:12px;color:#5b4fbf">496.76</div>
<div class="ab" style="left:275px;top:870px;width:1289px;height:49px;background:#f9fafd"></div>
<div class="ab" style="left:275px;top:919px;width:1289px;height:1px;background:#dadcdf"></div>
<div class="t" style="left:287px;top:879.3px;font-size:12.5px;color:#111">RH</div>
<div class="t" style="left:511px;top:883px;font-size:12px;font-weight:bold;color:#111">39000118</div>
<div class="t" style="left:511px;top:898px;font-size:9.6px;color:#222">[52251165800018] MAJUSCULE</div>
<div class="t" style="left:787px;top:883px;font-size:12px;font-weight:bold;color:#111">9/29/2023</div>
<div class="t" style="left:787px;top:898px;font-size:9.6px;color:#222">Received on 11/6/2023 4:00:01 AM</div>
<div class="ab" style="left:1051px;top:884px;width:172px;text-align:center"><span style="display:inline-block;height:22px;line-height:22px;padding:0 10px;border-radius:11px;background:#12b45c;color:#fff;font-size:11.9px">Validated<svg style="display:inline-block;vertical-align:-2px;margin-left:5px" width="13" height="13" viewBox="0 0 13 13"><circle cx="6.5" cy="6.5" r="6.5" fill="#fff"/><path d="M3.5 6.6 L5.6 8.7 L9.6 4.6" fill="none" stroke="#12b45c" stroke-width="2" stroke-linecap="round" stroke-linejoin="round"/></svg></span></div>
<div class="t" style="left:1223px;top:889px;width:160px;text-align:right;font-size:12px;color:#5b4fbf">496.76</div>
<div class="ab" style="left:275px;top:920px;width:1289px;height:49px;background:#fff"></div>
<div class="ab" style="left:275px;top:969px;width:1289px;height:1px;background:#dadcdf"></div>
<div class="t" style="left:287px;top:929.3px;font-size:12.5px;color:#111">RH</div>
<div class="t" style="left:511px;top:933px;font-size:12px;font-weight:bold;color:#111">39000118</div>
<div class="t" style="left:511px;top:948px;font-size:9.6px;color:#222">[52251165800018] MAJUSCULE</div>
<div class="t" style="left:787px;top:933px;font-size:12px;font-weight:bold;color:#111">9/29/2023</div>
<div class="t" style="left:787px;top:948px;font-size:9.6px;color:#222">Received on 11/5/2023 4:17:01 AM</div>
<div class="ab" style="left:1051px;top:934px;width:172px;text-align:center"><span style="display:inline-block;height:22px;line-height:22px;padding:0 10px;border-radius:11px;background:#868a90;color:#fff;font-size:11.9px">Paid<svg style="display:inline-block;vertical-align:-2px;margin-left:5px" width="13" height="13" viewBox="0 0 13 13"><circle cx="6.5" cy="6.5" r="6.5" fill="#fff"/><rect x="5.5" y="2.8" width="2" height="5" rx="0.8" fill="#868a90"/><rect x="5.5" y="8.8" width="2" height="1.8" rx="0.8" fill="#868a90"/></svg></span></div>
<div class="t" style="left:1223px;top:939px;width:160px;text-align:right;font-size:12px;color:#5b4fbf">496.76</div>
<div class="ab" style="left:275px;top:1004px;width:1289px;height:15px;background:#f1f1f1"></div>
<div class="ab" style="left:290px;top:1006px;width:1256px;height:11px;background:#c1c1c1"></div>
<svg class="ab" style="left:279px;top:1007px" width="6" height="9" viewBox="0 0 6 9"><path d="M6 0 L0 4.5 L6 9 Z" fill="#a3a3a3"/></svg>
<svg class="ab" style="left:1553px;top:1007px" width="6" height="9" viewBox="0 0 6 9"><path d="M0 0 L6 4.5 L0 9 Z" fill="#505050"/></svg>
<div class="ab" style="left:275px;top:1019px;width:1289px;height:1px;background:#c4cbd0"></div>
<div class="ab" style="left:275px;top:1020px;width:1289px;height:1px;background:#e6e9ec"></div>
<div class="t" style="left:295px;top:1031px;font-size:12px;font-weight:bold;color:#999">Rows :</div>
<div class="t" style="left:342px;top:1031px;font-size:12px;font-weight:bold;color:#111">13</div>
<div class="t" style="left:1443px;top:1031px;width:100px;text-align:right;font-size:12px;font-weight:bold;color:#999">Selected: <span style="color:#111">1</span></div>
<div class="ab" style="left:1577px;top:592px;width:2px;height:2px;background:#bdbdbd"></div>
<div class="ab" style="left:1580px;top:592px;width:2px;height:2px;background:#bdbdbd"></div>
<div class="ab" style="left:1577px;top:596px;width:2px;height:2px;background:#bdbdbd"></div>
<div class="ab" style="left:1580px;top:596px;width:2px;height:2px;background:#bdbdbd"></div>
<div class="ab" style="left:1577px;top:600px;width:2px;height:2px;background:#bdbdbd"></div>
<div class="ab" style="left:1580px;top:600px;width:2px;height:2px;background:#bdbdbd"></div>
<div class="ab" style="left:1577px;top:604px;width:2px;height:2px;background:#bdbdbd"></div>
<div class="ab" style="left:1580px;top:604px;width:2px;height:2px;background:#bdbdbd"></div>
<div class="ab" style="left:1577px;top:608px;width:2px;height:2px;background:#bdbdbd"></div>
<div class="ab" style="left:1580px;top:608px;width:2px;height:2px;background:#bdbdbd"></div>
<div class="ab" style="left:1577px;top:612px;width:2px;height:2px;background:#bdbdbd"></div>
<div class="ab" style="left:1580px;top:612px;width:2px;height:2px;background:#bdbdbd"></div>
<div class="ab" style="left:1577px;top:616px;width:2px;height:2px;background:#bdbdbd"></div>
<div class="ab" style="left:1580px;top:616px;width:2px;height:2px;background:#bdbdbd"></div>
<div class="ab" style="left:1577px;top:620px;width:2px;height:2px;background:#bdbdbd"></div>
<div class="ab" style="left:1580px;top:620px;width:2px;height:2px;background:#bdbdbd"></div>
<div class="ab" style="left:1588px;top:152px;width:320px;height:908px;background:#fff;border-radius:10px"></div>
<div class="ab" style="left:1603px;top:167px;width:25px;height:25px;border-radius:50%;background:#5f4bb8"></div>
<svg class="ab" style="left:1610px;top:172px" width="11" height="14" viewBox="0 0 11 14"><path d="M0 0.6 Q0 0 0.6 0 L7 0 L11 4 L11 13.4 Q11 14 10.4 14 L0.6 14 Q0 14 0 13.4 Z" fill="#fff"/><path d="M7 0 L7 4 L11 4" fill="#c9c1ea"/><path d="M2.3 11.5 L5.3 7.6 L5 5.5 M5.3 7.6 L8.3 10.2" fill="none" stroke="#5f4bb8" stroke-width="0.9"/></svg>
<div class="ab" style="left:1635px;top:167px;width:32px;height:25px;border-radius:13px;background:#5f4bb8"></div>
<svg class="ab" style="left:1644px;top:172px" width="14" height="14" viewBox="0 0 14 14"><circle cx="7" cy="7" r="7" fill="#fff"/><path d="M3.3 7 L10.3 7 M7.3 3.8 L10.5 7 L7.3 10.2" fill="none" stroke="#5f4bb8" stroke-width="1.8" stroke-linecap="round" stroke-linejoin="round"/></svg>
<div class="ab" style="left:1674px;top:167px;width:32px;height:25px;border-radius:13px;border:1px solid #2b95d6"></div>
<svg class="ab" style="left:1684px;top:172px" width="13" height="14" viewBox="0 0 13 14"><circle cx="6.5" cy="3.6" r="3.6" fill="#2b95d6"/><path d="M0 12.5 Q0 8.3 4 8.3 L9 8.3 Q13 8.3 13 12.5 L13 13 Q13 14 12 14 L1 14 Q0 14 0 13 Z" fill="#2b95d6"/></svg>
<div class="ab" style="left:1713px;top:167px;width:32px;height:25px;border-radius:13px;border:1px solid #2b95d6"></div>
<svg class="ab" style="left:1723px;top:172px" width="14" height="14" viewBox="0 0 16 16"><path d="M6.6 0 L9.4 0 L9.9 2.3 Q11 2.7 11.9 3.4 L14.1 2.6 L15.5 5 L13.8 6.6 Q14 8 13.8 9.4 L15.5 11 L14.1 13.4 L11.9 12.6 Q11 13.3 9.9 13.7 L9.4 16 L6.6 16 L6.1 13.7 Q5 13.3 4.1 12.6 L1.9 13.4 L0.5 11 L2.2 9.4 Q2 8 2.2 6.6 L0.5 5 L1.9 2.6 L4.1 3.4 Q5 2.7 6.1 2.3 Z M8 5.3 A2.7 2.7 0 1 0 8 10.7 A2.7 2.7 0 1 0 8 5.3 Z" fill="#2b95d6" fill-rule="evenodd"/></svg>
<div class="ab" style="left:1611px;top:200px;width:282px;height:845px;background:#ececee;overflow:hidden">
<div class="ab" style="left:0;top:0;width:282px;height:33px;background:#f9f9fa;border-bottom:1px solid #cfcfd8;box-shadow:0 1px 6px rgba(0,0,0,0.10)"></div>
<svg class="ab" style="left:8px;top:9px" width="16" height="15" viewBox="0 0 16 15"><rect x="0.9" y="0.9" width="14.2" height="13.2" rx="2" fill="none" stroke="#333" stroke-width="1.8"/><line x1="7" y1="1" x2="7" y2="14" stroke="#333" stroke-width="1.6"/><rect x="3" y="3.5" width="2.5" height="1" fill="#333"/><rect x="3" y="5.7" width="2.5" height="1" fill="#333"/><rect x="3" y="7.9" width="2.5" height="1" fill="#333"/></svg>
<svg class="ab" style="left:38px;top:8px" width="16" height="16" viewBox="0 0 16 16"><circle cx="6.3" cy="6.3" r="5" fill="none" stroke="#333" stroke-width="1.7"/><line x1="10" y1="10" x2="15" y2="15" stroke="#333" stroke-width="1.9" stroke-linecap="round"/></svg>
<div class="ab" style="left:61px;top:3px;width:56px;height:26px;border-radius:2px;background:#fff;border:1px solid #cdcdd2"></div>
<div class="t" style="left:58px;top:10px;width:51px;text-align:right;font-size:12.5px;color:#222">1</div>
<div class="t" style="left:122px;top:10px;font-size:12.5px;color:#222">of 1</div>
<div class="ab" style="left:200px;top:15px;width:12px;height:2px;background:#333"></div>
<div class="ab" style="left:220px;top:6px;width:1px;height:20px;background:#bdbdc3"></div>
<div class="ab" style="left:228px;top:15px;width:14px;height:2px;background:#333"></div>
<div class="ab" style="left:234px;top:9px;width:2px;height:14px;background:#333"></div>
<div class="ab" style="left:28px;top:42px;width:300px;height:374px;background:#fff;box-shadow:0 1px 5px rgba(0,0,0,0.22)">
<div class="ab" style="left:24.0px;top:25.0px;width:222.0px;height:2.0px;background:#d49a9a"></div>
<div class="ab" style="left:24.0px;top:25.0px;width:2.0px;height:72.0px;background:#d49a9a"></div>
<div class="t" style="left:36.0px;top:29.5px;font-size:5.0px;color:#222">Laetitia <b>WERNERT- EI</b></div>
<div class="t" style="left:36.0px;top:37.5px;font-size:5.0px;color:#222">Psychologue clinicienne</div>
<div class="t" style="left:36.0px;top:45.5px;font-size:5.0px;color:#222">2 avenue de l'Europe, 68000 COLMAR</div>
<div class="t" style="left:36.0px;top:53.5px;font-size:5.0px;color:#222">laetitia.wernert@gmail.com</div>
<div class="t" style="left:36.0px;top:61.5px;font-size:5.0px;color:#222">Tel : 07 83 64 89 66</div>
<div class="t" style="left:36.0px;top:69.5px;font-size:5.0px;color:#222">ADELI : 689302909</div>
<div class="t" style="left:36.0px;top:77.5px;font-size:5.0px;color:#222">SIRET : 81875048100017</div>
<div class="t" style="left:158.0px;top:29.5px;width:80px;text-align:right;font-size:5.0px;color:#222"><b>FACTURE n° E-2023-10-008-AS</b></div>
<div class="t" style="left:158.5px;top:38.2px;width:80px;text-align:right;font-size:5.9px;color:#222">Émise le 5 octobre 2023</div>
<div class="t" style="left:154.5px;top:68.2px;font-size:4.6px;color:#222">Alsace Service</div>
<div class="t" style="left:154.5px;top:75.2px;font-size:4.6px;color:#222">Prestations Sociales en Entreprise</div>
<div class="t" style="left:154.5px;top:81.5px;font-size:4.6px;color:#222">1 place de la Gare</div>
<div class="t" style="left:154.5px;top:88.3px;font-size:4.6px;color:#222">68000 COLMAR</div>
<div class="t" style="left:102.0px;top:100.7px;width:60px;text-align:center;font-size:4.8px;color:#222;font-weight:bold">Entreprise DARAMIC</div>
<div class="t" style="left:102.0px;top:107.2px;width:60px;text-align:center;font-size:4.6px;color:#222">25 rue Westrich</div>
<div class="t" style="left:102.0px;top:113.7px;width:60px;text-align:center;font-size:4.8px;color:#222;font-weight:bold">67600 SELESTAT</div>
<div class="ab" style="left:25.0px;top:128.0px;width:215.0px;height:1.3px;background:#111"></div>
<div class="ab" style="left:25.0px;top:143.0px;width:215.0px;height:1.3px;background:#111"></div>
<div class="ab" style="left:25.0px;top:196.5px;width:215.0px;height:1.3px;background:#111"></div>
<div class="ab" style="left:25.0px;top:128.0px;width:1.3px;height:69.8px;background:#111"></div>
<div class="ab" style="left:238.7px;top:128.0px;width:1.3px;height:78.8px;background:#111"></div>
<div class="ab" style="left:110.5px;top:128.0px;width:1.3px;height:69.0px;background:#111"></div>
<div class="ab" style="left:143.0px;top:128.0px;width:1.3px;height:69.0px;background:#111"></div>
<div class="ab" style="left:175.0px;top:128.0px;width:1.3px;height:69.0px;background:#111"></div>
<div class="ab" style="left:207.0px;top:128.0px;width:1.3px;height:69.0px;background:#111"></div>
<div class="ab" style="left:175.0px;top:197.0px;width:1.3px;height:9.8px;background:#111"></div>
<div class="ab" style="left:175.0px;top:205.5px;width:65.0px;height:1.3px;background:#111"></div>
<div class="t" style="left:37.5px;top:135.2px;width:60px;text-align:center;font-size:4.6px;color:#222">Désignation</div>
<div class="t" style="left:112.0px;top:135.2px;width:30px;text-align:center;font-size:4.6px;color:#222">Date</div>
<div class="t" style="left:142.0px;top:132.0px;width:34px;text-align:center;font-size:4.7px;color:#222">Tarif horaire</div>
<div class="t" style="left:142.0px;top:138.0px;width:34px;text-align:center;font-size:4.7px;color:#222">unitaire</div>
<div class="t" style="left:174.0px;top:132.0px;width:34px;text-align:center;font-size:4.7px;color:#222">Volume</div>
<div class="t" style="left:174.0px;top:138.0px;width:34px;text-align:center;font-size:4.7px;color:#222">horaire</div>
<div class="t" style="left:206.0px;top:135.1px;width:34px;text-align:center;font-size:4.7px;color:#222">Prix total HT</div>
<div class="t" style="left:37.5px;top:155.7px;width:60px;text-align:center;font-size:4.6px;color:#222">Entretiens individuels</div>
<div class="t" style="left:112.0px;top:155.7px;width:30px;text-align:center;font-size:4.6px;color:#222">10/08/23</div>
<div class="t" style="left:176.0px;top:155.7px;width:30px;text-align:center;font-size:4.6px;color:#222">1</div>
<div class="t" style="left:208.0px;top:155.7px;width:30px;text-align:right;font-size:4.6px;color:#222">80,5€</div>
<div class="t" style="left:112.0px;top:164.7px;width:30px;text-align:center;font-size:4.6px;color:#222">26/08/23</div>
<div class="t" style="left:176.0px;top:164.7px;width:30px;text-align:center;font-size:4.6px;color:#222">1</div>
<div class="t" style="left:208.0px;top:164.7px;width:30px;text-align:right;font-size:4.6px;color:#222">80,5€</div>
<div class="t" style="left:112.0px;top:173.7px;width:30px;text-align:center;font-size:4.6px;color:#222">02/10/23</div>
<div class="t" style="left:176.0px;top:173.7px;width:30px;text-align:center;font-size:4.6px;color:#222">1</div>
<div class="t" style="left:208.0px;top:173.7px;width:30px;text-align:right;font-size:4.6px;color:#222">80,5€</div>
<div class="t" style="left:144.0px;top:155.7px;width:30px;text-align:center;font-size:4.6px;color:#222">80,5€</div>
<div class="t" style="left:133.0px;top:200.9px;width:40px;text-align:right;font-size:4.6px;color:#222"><b>TOTAL TTC* :</b></div>
<div class="t" style="left:208.0px;top:200.9px;width:30px;text-align:right;font-size:4.6px;color:#222"><b>241,5€</b></div>
<div class="t" style="left:26.0px;top:208.9px;font-size:4.6px;color:#222">Statut : <span style='display:inline-block;width:3.2px;height:3.2px;border:0.6px solid #222;vertical-align:0'></span>&nbsp; A payer</div>
<div class="t" style="left:26.0px;top:215.9px;font-size:4.6px;color:#222">Règlement par : <span style='display:inline-block;width:3.2px;height:3.2px;border:0.6px solid #222;vertical-align:0'></span> Virement bancaire</div>
<div class="t" style="left:173.5px;top:295.6px;width:60px;text-align:center;font-size:4.6px;color:#222">Laetitia <b>WERNERT</b></div>
<div class="t" style="left:173.5px;top:302.6px;width:60px;text-align:center;font-size:4.6px;color:#222">Psychologue clinicienne</div>
<svg class="ab" style="left:166px;top:312px" width="76" height="18" viewBox="0 0 76 18"><path d="M1 10 Q20 9 40 8 Q60 9 75 14 M8 14 Q12 3 16 4 Q14 10 12 16 Q18 6 22 6 Q20 12 22 14 Q25 8 28 8 Q27 13 30 12 Q32 8 34 9 Q35 13 38 11 Q40 4 42 2 Q41 9 44 10 Q50 11 58 12" fill="none" stroke="#444" stroke-width="0.7"/></svg>
<div class="t" style="left:26.0px;top:336.0px;font-size:2.8px;color:#222">Montant à régler au plus tard 3 mois suivant la date de la facturation</div>
<div class="t" style="left:175.0px;top:336.0px;width:60px;text-align:right;font-size:2.8px;color:#222">*TVA non applicable, art. 293 B du CGI</div>
<div class="ab" style="left:25.0px;top:341.5px;width:216.0px;height:2.0px;background:#d49a9a"></div>
<div class="ab" style="left:239.0px;top:335.0px;width:2.0px;height:8.5px;background:#d49a9a"></div>
</div>
<div class="ab" style="left:0;top:830px;width:282px;height:15px;background:#f1f1f1"></div>
<div class="ab" style="left:15px;top:832px;width:222px;height:11px;background:#c1c1c1"></div>
<svg class="ab" style="left:4px;top:833px" width="6" height="9" viewBox="0 0 6 9"><path d="M6 0 L0 4.5 L6 9 Z" fill="#a3a3a3"/></svg>
<svg class="ab" style="left:271px;top:833px" width="6" height="9" viewBox="0 0 6 9"><path d="M0 0 L6 4.5 L0 9 Z" fill="#505050"/></svg>
</div>
</body></html>
